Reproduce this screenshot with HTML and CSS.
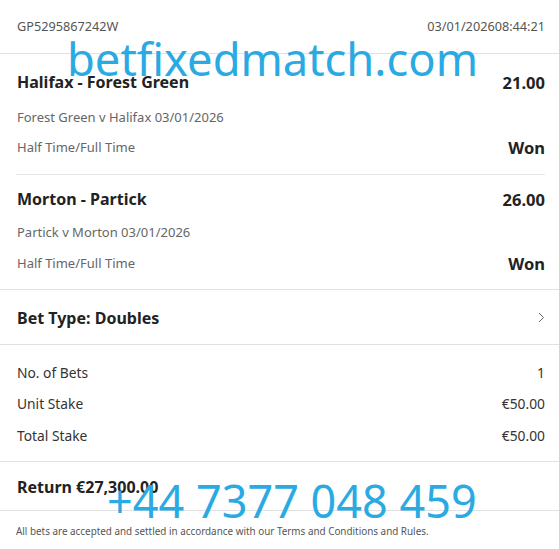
FILE: index.html
```html
<!DOCTYPE html>
<html lang="en">
<head>
<meta charset="utf-8">
<title>Bet receipt</title>
<link rel="stylesheet" href="styles.css">
</head>
<body>
<div class="receipt">
  <div class="header">
    <span class="ref">GP5295867242W</span>
    <span class="stamp">03/01/202608:44:21</span>
  </div>

  <div class="match match-first">
    <div class="row title-row">
      <span class="title">Halifax - Forest Green</span>
      <span class="odds">21.00</span>
    </div>
    <div class="row sub-row">
      <span class="sub">Forest Green v Halifax 03/01/2026</span>
    </div>
    <div class="row market-row">
      <span class="sub">Half Time/Full Time</span>
      <span class="result">Won</span>
    </div>
  </div>
  <div class="inner-divider"></div>
  <div class="match match-second">
    <div class="row title-row">
      <span class="title">Morton - Partick</span>
      <span class="odds">26.00</span>
    </div>
    <div class="row sub-row">
      <span class="sub">Partick v Morton 03/01/2026</span>
    </div>
    <div class="row market-row">
      <span class="sub">Half Time/Full Time</span>
      <span class="result">Won</span>
    </div>
  </div>

  <div class="bettype">
    <span class="bettype-label">Bet Type: Doubles</span>
    <svg class="chevron" width="7" height="11" viewBox="0 0 7 11"><path d="M1 1 L5.5 5.5 L1 10" fill="none" stroke="#666" stroke-width="1"/></svg>
  </div>

  <div class="summary">
    <div class="srow"><span>No. of Bets</span><span>1</span></div>
    <div class="srow"><span>Unit Stake</span><span>€50.00</span></div>
    <div class="srow"><span>Total Stake</span><span>€50.00</span></div>
  </div>

  <div class="return">Return €27,300.00</div>

  <div class="footer">All bets are accepted and settled in accordance with our Terms and Conditions and Rules.</div>

  <div class="wm wm-site">betfixedmatch.com</div>
  <div class="wm wm-phone">+44 7377 048 459</div>
</div>
</body>
</html>
```

FILE: styles.css
```css
* { box-sizing: border-box; }
html, body { margin: 0; padding: 0; background: #fff; }
body {
  font-family: "Noto Sans", "Open Sans", "DejaVu Sans", sans-serif;
  color: #222;
}
.receipt {
  position: relative;
  width: 559px;
  height: 549px;
  overflow: hidden;
}
.header {
  height: 54px;
  display: flex;
  justify-content: space-between;
  align-items: center;
  padding: 0 14px 1px 17px;
  border-bottom: 1px solid #e1e1e1;
  font-size: 12.7px;
  color: #555;
}
.match {
  padding: 13px 14px 17px 17px;
}
.match-first { padding-top: 17px; }
.match-second { padding-bottom: 16px; }
.row {
  display: flex;
  justify-content: space-between;
  align-items: center;
}
.title-row { height: 22px; }
.sub-row { height: 20px; margin-top: 14px; }
.market-row { height: 20px; margin-top: 10px; }
.match-second .sub-row { margin-top: 12px; }
.match-second .market-row { margin-top: 11px; }
.title { font-weight: 700; font-size: 16px; color: #222; }
.odds { font-weight: 700; font-size: 16.5px; color: #222; }
.sub { font-size: 13px; color: #666; }
.result { font-weight: 700; font-size: 16.5px; color: #222; }
.inner-divider {
  height: 1px;
  margin: 0 14px 0 16px;
  background: #e6e6e6;
}
.bettype {
  border-top: 1px solid #e1e1e1;
  border-bottom: 1px solid #e1e1e1;
  height: 56px;
  display: flex;
  justify-content: space-between;
  align-items: center;
  padding: 1px 14px 0 17px;
}
.bettype-label { font-weight: 700; font-size: 16px; color: #222; }
.chevron { display: block; }
.summary {
  padding: 17px 14px 16px 17px;
  display: flex;
  flex-direction: column;
  gap: 11.5px;
  border-bottom: 1px solid #e1e1e1;
}
.srow {
  height: 20px;
  display: flex;
  justify-content: space-between;
  align-items: center;
  font-size: 13.8px;
  color: #333;
}
.return {
  height: 49px;
  display: flex;
  align-items: center;
  padding: 1px 17px 0 17px;
  font-weight: 700;
  font-size: 16px;
  color: #222;
  border-bottom: 1px solid #e1e1e1;
}
.footer {
  padding: 12px 17px 0 16px;
  font-size: 9.9px;
  color: #555;
  line-height: 16px;
}
.wm {
  position: absolute;
  color: #2aaae2;
  font-family: "Noto Sans", "Open Sans", sans-serif;
  white-space: nowrap;
  line-height: 1;
}
.wm-site { left: 67px; top: 36px; font-size: 45.3px; }
.wm-phone { left: 107px; top: 478px; font-size: 45px; }
```
